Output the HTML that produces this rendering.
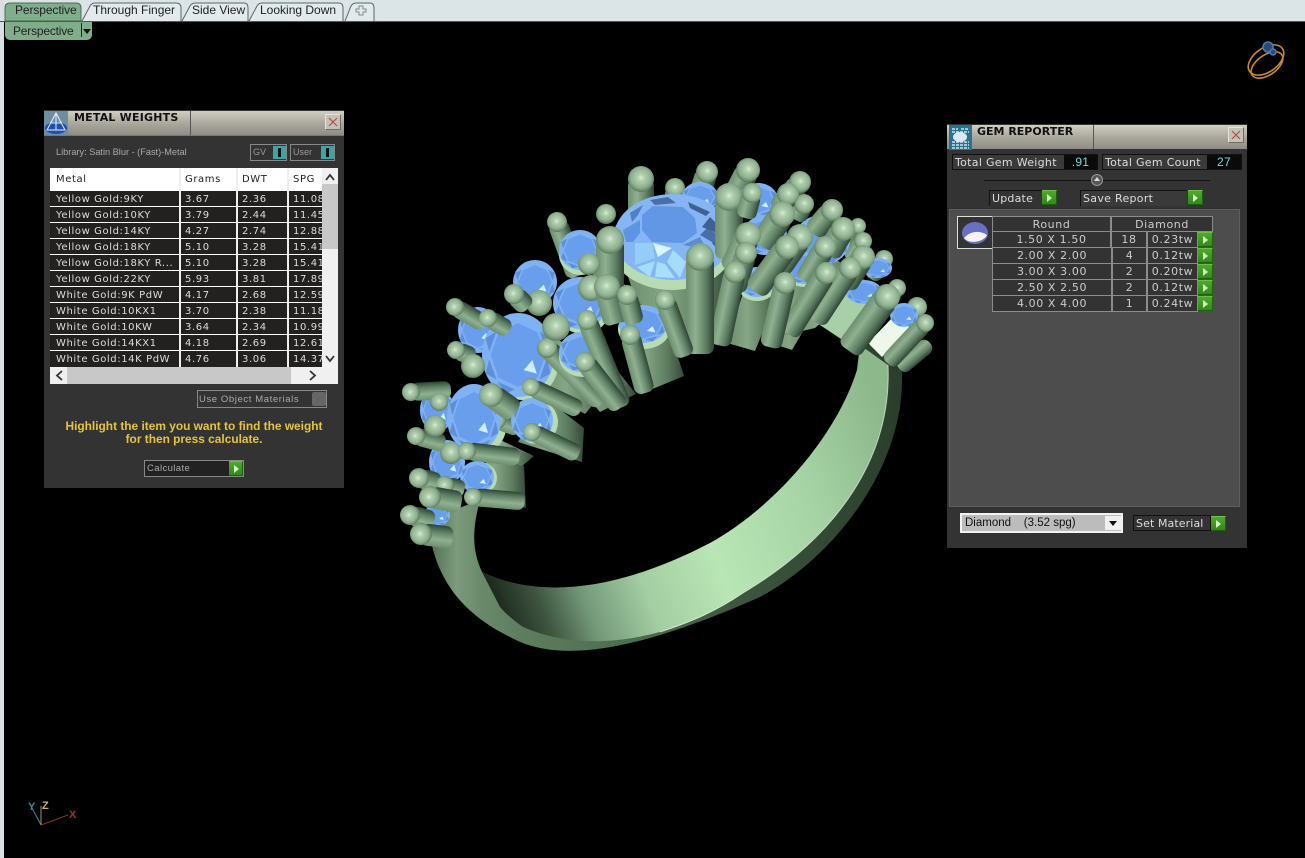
<!DOCTYPE html>
<html><head><meta charset="utf-8"><title>Gem Reporter</title>
<style>
html,body{margin:0;padding:0;width:1305px;height:858px;overflow:hidden;background:#000}
body{position:relative;font-family:"Liberation Sans",sans-serif}
.a,.a *{box-sizing:border-box}
.a{position:absolute;white-space:nowrap}
.d{font-family:"DejaVu Sans",sans-serif;font-size:10px;color:#ddd}
.g{position:absolute;width:15px;height:15px;background:linear-gradient(#4fa92c,#2f8a18);border-top:1px solid #6cc04a;border-right:1px solid #1f5f10;border-bottom:1px solid #1f5f10}
.g:after{content:"";position:absolute;left:5px;top:3px;border-left:5px solid #d9f0c8;border-top:4px solid transparent;border-bottom:4px solid transparent}
.tb{background:linear-gradient(#d0cec2,#a8a69b 55%,#8f8d83);}
.x{position:absolute;width:16px;height:16px;background:#c4c2b6;border:1px solid #e6e4da;border-right-color:#6e6c64;border-bottom-color:#6e6c64}
.tt{position:absolute;top:2px;font-size:12px;color:#222;line-height:16px}
.r{position:absolute;left:0;width:272px;height:15px;background:#222120;overflow:hidden;letter-spacing:.6px}
.r span,.h span{position:absolute;top:1.500px;line-height:14px}
.h span{color:#222;top:5px;letter-spacing:.6px}
.vl{position:absolute;width:1.5px;background:#eee}
.rw{position:absolute;height:16px;border:1px solid #8c8c8c;border-top:0;background:#333;color:#ccc;font-size:11px;letter-spacing:.6px;line-height:16px;text-align:center}
.p rect{fill:url(#c);rx:7px}.p circle{fill:url(#b)}
</style></head>
<body>
<div class="a" style="left:0;top:0;width:1305px;height:21px;background:#dbe4e6"></div>
<svg class="a" style="left:0;top:0" width="400" height="22">
<path d="M5,21 V8 Q5,3 10,3 H76 Q81,3 81,8 V21 Z" fill="#7fae8a" stroke="#4f6a55"/>
<g fill="#e2eaec" stroke="#5c6468">
<path d="M82,21 L90,6 Q92,3 95,3 H176 Q181,3 181,8 V21" />
<path d="M182,21 L190,6 Q192,3 195,3 H244 Q248,3 248,8 V21"/>
<path d="M249,21 L257,6 Q259,3 262,3 H339 Q343,3 343,8 V21"/>
<path d="M345,21 L351,6 Q353,3 356,3 H370 Q374,3 374,8 V21"/>
</g>
<path d="M359,6 H363 V9 H366 V12 H363 V15 H359 V12 H356 V9 H359 Z" stroke="#888" fill="none"/>
</svg>
<div class="tt" style="left:15px;letter-spacing:-.1px">Perspective</div>
<div class="tt" style="left:93px">Through Finger</div>
<div class="tt" style="left:192px">Side View</div>
<div class="tt" style="left:260px">Looking Down</div>
<div class="a" style="left:0;top:0;width:4px;height:858px;background:#d9dfe2"></div>
<div class="a" style="left:0;top:21px;width:1305px;height:1px;background:#555"></div>
<div class="a" style="left:5px;top:22px;width:87px;height:18px;background:#80ad8a;border-radius:0 0 5px 5px;font-size:12px;letter-spacing:-.2px;color:#222;line-height:18px;padding-left:8px">Perspective
<div class="a" style="left:76px;top:1px;width:1px;height:14px;background:#222"></div>
<div class="a" style="left:78px;top:7px;border-top:5px solid #111;border-left:4px solid transparent;border-right:4px solid transparent"></div></div>

<svg class="a" style="left:0;top:0" width="1305" height="858" viewBox="0 0 1305 858">
<defs>
<linearGradient id="c" x1="0" x2="1" y1="0" y2="0"><stop offset="0" stop-color="#6d8f6f"/><stop offset=".35" stop-color="#8fb190"/><stop offset=".72" stop-color="#5c7d62"/><stop offset="1" stop-color="#2f4435"/></linearGradient>
<radialGradient id="b" cx=".5" cy=".45" r=".55"><stop offset="0" stop-color="#d8ecd4"/><stop offset=".25" stop-color="#b0cfae"/><stop offset=".7" stop-color="#8fb090"/><stop offset="1" stop-color="#5a7a5c"/></radialGradient>
<linearGradient id="of" gradientUnits="userSpaceOnUse" x1="428" x2="900" y1="0" y2="0"><stop offset="0" stop-color="#4f6c50"/><stop offset=".06" stop-color="#7b9b7c"/><stop offset=".11" stop-color="#6a8a6b"/><stop offset=".2" stop-color="#5d7d5f"/><stop offset=".4" stop-color="#4f6f51"/><stop offset=".7" stop-color="#3a533c"/><stop offset="1" stop-color="#2a3e2c"/></linearGradient>
<linearGradient id="fc" gradientUnits="userSpaceOnUse" x1="490" x2="890" y1="590" y2="440"><stop offset="0" stop-color="#1c281d"/><stop offset=".1" stop-color="#3e5640"/><stop offset=".2" stop-color="#74997a"/><stop offset=".34" stop-color="#a3cda2"/><stop offset=".52" stop-color="#b9e6b5"/><stop offset=".78" stop-color="#a6d3a4"/><stop offset="1" stop-color="#8cb88c"/></linearGradient>
<linearGradient id="bd" x1="0" x2="1" y1="0" y2="0"><stop offset="0" stop-color="#6a8a6b"/><stop offset=".4" stop-color="#86a786"/><stop offset=".75" stop-color="#5d7c5f"/><stop offset="1" stop-color="#34493a"/></linearGradient>
<g id="gm">
<circle r="50" fill="#7fb2f3"/>
<polygon points="38,0 27,27 0,38 -27,27 -38,0 -27,-27 0,-38 27,-27" fill="#689eeb"/>
<g fill="#5f8fd8"><polygon points="40,4 30,29 45,22"/><polygon points="4,41 30,32 20,46"/><polygon points="-4,41 -28,32 -18,46"/><polygon points="-40,5 -30,29 -45,22"/><polygon points="-40,-4 -30,-28 -45,-20"/><polygon points="40,-4 30,-28 45,-20"/></g>
<polygon points="8,18 20,6 26,22" fill="#cfefff"/>
</g>
</defs>

<path d="M428,520 C432,570 455,610 510,637 C560,665 640,650 760,597 C830,560 905,470 902,373 L900,345 L860,345 L857,370 C835,440 770,510 710,543 C620,590 540,600 482,572 C472,550 472,530 480,500 Z" fill="url(#of)"/>
<path d="M482,572 C540,600 620,590 710,543 C770,510 835,440 857,370 L860,345 L888,365 C892,455 840,535 743,593 C690,630 600,660 523,627 C513,620 505,613 500,607 Z" fill="url(#fc)"/>
<path d="M888,365 C892,455 840,535 743,593 C715,612 690,622 660,632" fill="none" stroke="#e4f6df" stroke-width="1" opacity=".7"/>

<g class="p">
<g transform="translate(641 179)"><rect x="-13" width="26" height="55"/><circle r="13"/></g>
<g transform="translate(707 172) rotate(18)"><rect x="-11" width="22" height="32"/><circle r="11"/></g>
<g transform="translate(748 170) rotate(27)"><rect x="-12" width="24" height="32"/><circle r="12"/></g>
<g transform="translate(800 182) rotate(37)"><rect x="-11" width="22" height="40"/><circle r="11"/></g>
<g transform="translate(675 188)"><rect x="-10" width="20" height="12"/><circle r="10"/></g>
<g transform="translate(606 214)"><circle r="10"/></g>
<g transform="translate(557 222) rotate(-20)"><rect x="-10" width="20" height="58"/><circle r="10"/></g>
<g transform="translate(917 307) rotate(40)"><rect x="-9" width="18" height="24"/><circle r="10"/></g>
<g transform="translate(897 288) rotate(35)"><rect x="-9" width="18" height="24"/><circle r="9"/></g>
<g transform="translate(884 259) rotate(35)"><rect x="-9" width="18" height="24"/><circle r="9"/></g>
<g transform="translate(858 226) rotate(35)"><rect x="-8" width="16" height="24"/><circle r="8"/></g>
<g transform="translate(863 241) rotate(35)"><rect x="-9" width="18" height="24"/><circle r="9"/></g>
<g transform="translate(930 343) rotate(50)"><rect x="-8" width="16" height="40"/></g>
</g>

<g fill="url(#bd)">
<polygon points="622,258 648,338 708,348 730,258"/>
<polygon points="618,325 645,392 684,376 670,332"/>
<polygon points="743,293 727,343 755,351 777,297"/>
<polygon points="790,270 762,340 792,350 830,285"/>
<polygon points="830,255 868,282 815,328 785,335"/>
<polygon points="562,365 600,412 636,394 605,355"/>
<polygon points="535,385 585,414 612,382 553,335"/>
<polygon points="545,398 584,428 582,462 518,442"/>
<polygon points="488,458 524,466 526,508 473,493"/>
<polygon points="492,436 534,456 522,466 478,452"/>
<polygon points="590,270 625,330 650,315 600,255"/>
</g>
<polygon points="817,323 848,290 873,303 847,343" fill="#a9cfa8"/>
<polygon points="868,343 893,317 910,327 882,357" fill="#eef8ea"/>

<g fill="#b7dcb3">
<ellipse cx="672" cy="245" rx="62" ry="45"/><ellipse cx="581" cy="255" rx="22" ry="20"/><ellipse cx="644" cy="329" rx="26" ry="20"/><ellipse cx="757" cy="286" rx="19" ry="15"/><ellipse cx="805" cy="272" rx="21" ry="15"/><ellipse cx="583" cy="308" rx="27" ry="26"/><ellipse cx="523" cy="360" rx="36" ry="40"/><ellipse cx="480" cy="422" rx="27" ry="33"/>
</g>
<use href="#gm" transform="translate(700 197) scale(.36 .3)"/>
<use href="#gm" transform="translate(758 200) scale(.4 .34)"/>
<use href="#gm" transform="translate(765 235) scale(.44 .4)"/>
<use href="#gm" transform="translate(822 240) scale(.56 .5)"/>
<use href="#gm" transform="translate(878 268) scale(.28 .2)"/>
<use href="#gm" transform="translate(757 282) scale(.36 .3)"/>
<use href="#gm" transform="translate(805 268) scale(.4 .32)"/>
<use href="#gm" transform="translate(864 292) scale(.36 .24)"/>
<use href="#gm" transform="translate(904 315) scale(.28 .24)"/>
<use href="#gm" transform="translate(580 250) scale(.42 .4)"/>
<use href="#gm" transform="translate(643 324) scale(.48 .38)"/>
<use href="#gm" transform="translate(535 282) scale(.44 .44)"/>
<use href="#gm" transform="translate(580 303) scale(.54 .52)"/>
<use href="#gm" transform="translate(478 330) scale(.4 .46)"/>
<use href="#gm" transform="translate(518 355) scale(.72 .84)"/>
<g class="p">
<g transform="translate(547 348) rotate(-45)"><rect x="-10" width="20" height="78"/><circle r="10"/></g>
<g transform="translate(497 420) rotate(-70)"><rect x="-9" width="18" height="25"/><circle r="9"/></g>
</g>
<ellipse cx="583" cy="357" rx="24" ry="20" fill="#b7dcb3"/>
<use href="#gm" transform="translate(581 352) scale(.44 .4)"/>
<ellipse cx="536" cy="422" rx="22" ry="22" fill="#b7dcb3"/>
<use href="#gm" transform="translate(532 420) scale(.42 .44)"/>
<use href="#gm" transform="translate(437 410) scale(.34 .44)"/>
<use href="#gm" transform="translate(474 418) scale(.54 .68)"/>
<use href="#gm" transform="translate(447 462) scale(.36 .44)"/>
<ellipse cx="480" cy="478" rx="17" ry="16" fill="#b7dcb3"/>
<use href="#gm" transform="translate(477 477) scale(.34 .32)"/>
<use href="#gm" transform="translate(437 515) scale(.26 .22)"/>

<ellipse cx="673" cy="237" rx="59" ry="43" fill="#85b6f3"/>
<polygon points="642,215 653,206 683,207 695,218 697,233 683,243 652,242 642,230" fill="#6197e4"/>
<g fill="#4a6fa8"><polygon points="650,200 668,197 676,203 655,205"/><polygon points="700,235 707,228 722,237 717,245"/></g>
<g fill="#3f6090"><polygon points="688,202 710,212 706,216 690,208"/><polygon points="702,227 710,217 725,232 722,235"/><polygon points="712,243 727,235 723,248 718,250"/></g>
<polygon points="630,213 643,205 638,215 632,222" fill="#4f7fc4"/>
<polygon points="623,230 640,220 640,233 633,242 626,242" fill="#5d94e4"/>
<polygon points="683,245 700,237 707,250 693,247" fill="#5c8bd0"/>
<polygon points="635,243 652,243 655,258 635,265" fill="#94cdf8"/>
<polygon points="653,243 672,248 658,257" fill="#d8f7fe"/>
<polygon points="673,250 686,262 680,278 667,262" fill="#a4dcfb"/>
<polygon points="637,267 655,261 650,277" fill="#a4dcfb"/>
<polygon points="657,262 665,264 675,278 655,277" fill="#a8e0fb"/>

<g class="p">
<g transform="translate(729 197)"><rect x="-14" width="28" height="62"/><circle r="14"/></g>
<g transform="translate(752 193) rotate(15)"><rect x="-10" width="20" height="26"/><circle r="10"/></g>
<g transform="translate(804 204) rotate(30)"><rect x="-10" width="20" height="18"/><circle r="10"/></g>
<g transform="translate(788 194) rotate(30)"><rect x="-11" width="22" height="20"/><circle r="11"/></g>
<g transform="translate(782 214) rotate(33)"><rect x="-13" width="26" height="38"/><circle r="13"/></g>
<g transform="translate(832 210) rotate(40)"><rect x="-11" width="22" height="30"/><circle r="11"/></g>
<g transform="translate(843 229) rotate(30)"><rect x="-12" width="24" height="30"/><circle r="12"/></g>
<g transform="translate(800 237) rotate(35)"><rect x="-13" width="26" height="40"/><circle r="13"/></g>
<g transform="translate(748 235) rotate(25)"><rect x="-13" width="26" height="40"/><circle r="13"/></g>
<g transform="translate(746 253) rotate(17)"><rect x="-11" width="22" height="40"/><circle r="11"/></g>
<g transform="translate(787 247) rotate(36)"><rect x="-12" width="24" height="55"/><circle r="12"/></g>
<g transform="translate(825 247) rotate(31)"><rect x="-11" width="22" height="40"/><circle r="11"/></g>
<g transform="translate(863 257) rotate(33)"><rect x="-12" width="24" height="35"/><circle r="12"/></g>
<g transform="translate(850 268) rotate(33)"><rect x="-11" width="22" height="64"/><circle r="11"/></g>
<g transform="translate(826 273) rotate(32)"><rect x="-11" width="22" height="72"/><circle r="11"/></g>
<g transform="translate(785 283) rotate(13)"><rect x="-11" width="22" height="66"/><circle r="11"/></g>
<g transform="translate(735 272) rotate(12)"><rect x="-11" width="22" height="75"/><circle r="11"/></g>
<g transform="translate(700 257)"><rect x="-14" width="28" height="97"/><circle r="14"/></g>
<g transform="translate(887 297) rotate(36)"><rect x="-13" width="26" height="66"/><circle r="13"/></g>
<g transform="translate(925 323) rotate(43)"><rect x="-9" width="18" height="55"/><circle r="9"/></g>
<g transform="translate(610 240)"><rect x="-14" width="28" height="62"/><circle r="14"/></g>
<g transform="translate(589 264)"><circle r="11"/></g>
<g transform="translate(591 288)"><circle r="13"/></g>
<g transform="translate(607 287) rotate(-15)"><rect x="-13" width="26" height="38"/><circle r="13"/></g>
<g transform="translate(627 295) rotate(-15)"><rect x="-10" width="20" height="30"/><circle r="10"/></g>
<g transform="translate(665 300) rotate(-20)"><rect x="-10" width="20" height="60"/><circle r="10"/></g>
<g transform="translate(630 335) rotate(-15)"><rect x="-10" width="20" height="60"/><circle r="10"/></g>
<g transform="translate(587 320) rotate(-22)"><rect x="-10" width="20" height="94"/><circle r="10"/></g>
<g transform="translate(585 362) rotate(-38)"><rect x="-10" width="20" height="58"/><circle r="10"/></g>
<g transform="translate(547 348)"><circle r="10"/></g>
<g transform="translate(556 327)"><circle r="14"/></g>
<g transform="translate(539 303)"><circle r="13"/></g>
<g transform="translate(514 294) rotate(-45)"><rect x="-10" width="20" height="20"/><circle r="10"/></g>
<g transform="translate(455 307) rotate(-60)"><rect x="-9" width="18" height="35"/><circle r="9"/></g>
<g transform="translate(488 318) rotate(-60)"><rect x="-9" width="18" height="25"/><circle r="9"/></g>
<g transform="translate(456 350) rotate(-68)"><rect x="-9" width="18" height="20"/><circle r="9"/></g>
<g transform="translate(473 366)"><circle r="12"/></g>
<g transform="translate(491 395) rotate(-55)"><rect x="-12" width="24" height="30"/><circle r="12"/></g>
<g transform="translate(531 387) rotate(-65)"><rect x="-9" width="18" height="55"/><circle r="9"/></g>
<g transform="translate(532 432) rotate(-64)"><rect x="-9" width="18" height="52"/><circle r="9"/></g>
<g transform="translate(411 392) rotate(-93)"><rect x="-9" width="18" height="40"/><circle r="9"/></g>
<g transform="translate(439 402)"><circle r="9"/></g>
<g transform="translate(416 436) rotate(-75)"><rect x="-9" width="18" height="30"/><circle r="9"/></g>
<g transform="translate(435 426)"><circle r="11"/></g>
<g transform="translate(451 453)"><circle r="11"/></g>
<g transform="translate(467 451) rotate(-83)"><rect x="-9" width="18" height="53"/><circle r="9"/></g>
<g transform="translate(419 478) rotate(-75)"><rect x="-10" width="20" height="22"/><circle r="10"/></g>
<g transform="translate(445 485) rotate(-75)"><rect x="-9" width="18" height="20"/><circle r="9"/></g>
<g transform="translate(410 515) rotate(-75)"><rect x="-10" width="20" height="25"/><circle r="10"/></g>
<g transform="translate(430 497) rotate(-80)"><rect x="-11" width="22" height="32"/><circle r="11"/></g>
<g transform="translate(473 497) rotate(-85)"><rect x="-9" width="18" height="52"/><circle r="9"/></g>
<g transform="translate(421 534) rotate(-83)"><rect x="-11" width="22" height="32"/><circle r="11"/></g>
</g>

<g fill="none" stroke="#c98a2c" stroke-width="1.6">
<ellipse cx="1266" cy="60" rx="20" ry="12" transform="rotate(-35 1266 60)"/>
<ellipse cx="1267" cy="65" rx="18" ry="10" transform="rotate(-35 1267 65)"/>
</g>
<g fill="#2c4a78" stroke="#4a7db0" stroke-width="1.500"><circle cx="1268" cy="47" r="5"/><circle cx="1273" cy="52" r="3"/></g>
<g stroke-width="1" fill="none">
<line x1="41" y1="825" x2="31" y2="806" stroke="#3a8a94"/>
<line x1="41" y1="825" x2="41" y2="806" stroke="#a89a5a"/>
<line x1="41" y1="825" x2="68" y2="815" stroke="#8a3030"/>
</g>
<text x="28" y="810" font-family="Liberation Sans" font-size="11" font-weight="bold" fill="#3a8a94">Y</text>
<text x="42" y="809" font-family="Liberation Sans" font-size="11" font-weight="bold" fill="#c8b070">Z</text>
<text x="69" y="818" font-family="Liberation Sans" font-size="11" font-weight="bold" fill="#a03030">X</text>
</svg>

<!-- METAL WEIGHTS -->
<div class="a" style="left:44px;top:110px;width:300px;height:378px;background:#333">
<div class="a tb" style="left:0;top:1px;width:300px;height:24px"></div>
<div class="a" style="left:146px;top:1px;width:1px;height:24px;background:#555"></div>
<div class="a" style="left:0;top:25px;width:300px;height:1px;background:#777"></div>
<svg class="a" style="left:0;top:1px" width="24" height="24"><rect width="24" height="24" fill="#6f8ea0"/><ellipse cx="12" cy="17" rx="11" ry="6" fill="#1d4fb0"/><path d="M12,2 L3,19 H21 Z M12,2 V19 M7,12 H17" fill="none" stroke="#e8f0f8" stroke-width="1"/></svg>
<div class="a" style="left:30px;top:0;font:bold 11px/15px 'DejaVu Sans',sans-serif;letter-spacing:.2px;color:#111">METAL WEIGHTS</div>
<div class="x" style="left:281px;top:4px"><svg width="14" height="14" style="display:block"><path d="M3,3 L11,11 M11,3 L3,11" stroke="#b84b3e" stroke-width="1.2"/></svg></div>
<div class="a" style="left:12px;top:36px;font-size:9.2px;line-height:12px;color:#aaa">Library: Satin Blur - (Fast)-Metal</div>
<div class="a" style="left:206px;top:34px;width:37px;height:17px;border:1px solid #888;font-size:9px;line-height:15px;color:#999;padding-left:2px">GV<div class="a" style="left:22px;top:1px;width:13px;height:13px;background:#39a5a5"><div class="a" style="left:5px;top:2px;width:3px;height:9px;background:#111"></div></div></div>
<div class="a" style="left:246px;top:34px;width:45px;height:17px;border:1px solid #888;font-size:9px;line-height:15px;color:#999;padding-left:2px">User<div class="a" style="left:30px;top:1px;width:13px;height:13px;background:#39a5a5"><div class="a" style="left:5px;top:2px;width:3px;height:9px;background:#111"></div></div></div>
<div class="a" style="left:6px;top:58px;width:288px;height:216px;background:#f0f0f0">
<div class="a" style="left:0;top:0;width:272px;height:199px;background:#fff;overflow:hidden">
<div class="a h d" style="left:0;top:0;width:272px;height:23px"><span style="left:6px">Metal</span><span style="left:135px">Grams</span><span style="left:192px">DWT</span><span style="left:243px">SPG</span></div>
<div class="r d" style="top:23px"><span style="left:6px">Yellow Gold:9KY</span><span style="left:135px">3.67</span><span style="left:192px">2.36</span><span style="left:243px">11.08</span></div>
<div class="r d" style="top:39px"><span style="left:6px">Yellow Gold:10KY</span><span style="left:135px">3.79</span><span style="left:192px">2.44</span><span style="left:243px">11.45</span></div>
<div class="r d" style="top:55px"><span style="left:6px">Yellow Gold:14KY</span><span style="left:135px">4.27</span><span style="left:192px">2.74</span><span style="left:243px">12.88</span></div>
<div class="r d" style="top:71px"><span style="left:6px">Yellow Gold:18KY</span><span style="left:135px">5.10</span><span style="left:192px">3.28</span><span style="left:243px">15.41</span></div>
<div class="r d" style="top:87px"><span style="left:6px">Yellow Gold:18KY R...</span><span style="left:135px">5.10</span><span style="left:192px">3.28</span><span style="left:243px">15.41</span></div>
<div class="r d" style="top:103px"><span style="left:6px">Yellow Gold:22KY</span><span style="left:135px">5.93</span><span style="left:192px">3.81</span><span style="left:243px">17.89</span></div>
<div class="r d" style="top:119px"><span style="left:6px">White Gold:9K PdW</span><span style="left:135px">4.17</span><span style="left:192px">2.68</span><span style="left:243px">12.59</span></div>
<div class="r d" style="top:135px"><span style="left:6px">White Gold:10KX1</span><span style="left:135px">3.70</span><span style="left:192px">2.38</span><span style="left:243px">11.18</span></div>
<div class="r d" style="top:151px"><span style="left:6px">White Gold:10KW</span><span style="left:135px">3.64</span><span style="left:192px">2.34</span><span style="left:243px">10.99</span></div>
<div class="r d" style="top:167px"><span style="left:6px">White Gold:14KX1</span><span style="left:135px">4.18</span><span style="left:192px">2.69</span><span style="left:243px">12.61</span></div>
<div class="r d" style="top:183px;height:16px"><span style="left:6px">White Gold:14K PdW</span><span style="left:135px">4.76</span><span style="left:192px">3.06</span><span style="left:243px">14.37</span></div>
<div class="vl" style="left:129px;top:0;height:199px"></div>
<div class="vl" style="left:186px;top:0;height:199px"></div>
<div class="vl" style="left:237px;top:0;height:199px"></div>
</div>
<div class="a" style="left:272px;top:16px;width:16px;height:65px;background:#c8c8c8"></div>
<div class="a" style="left:17px;top:199px;width:224px;height:17px;background:#c8c8c8"></div>
<svg class="a" style="left:0;top:0" width="288" height="216"><path d="M276,12 L280,7 L284,12 M276,188 L280,193 L284,188" fill="none" stroke="#333" stroke-width="1.8"/><path d="M12,203 L7,207.500 L12,212 M260,203 L265,207.500 L260,212" fill="none" stroke="#333" stroke-width="1.8"/></svg>
</div>
<div class="a" style="left:153px;top:280px;width:130px;height:18px;border:1px solid #888;font-size:9.500px;letter-spacing:.6px;line-height:17px;color:#aaa;padding-left:1px">Use Object Materials<div class="a" style="left:114px;top:1px;width:14px;height:14px;background:#666;border-radius:2px"></div></div>
<div class="a" style="left:0;top:310px;width:300px;text-align:center;font:bold 11.9px/13px 'Liberation Sans',sans-serif;color:#e6c43c">Highlight the item you want to find the weight<br>for then press calculate.</div>
<div class="a" style="left:100px;top:350px;width:100px;height:17px;border:1px solid #888;background:#222;font-size:9.500px;letter-spacing:.4px;line-height:16px;color:#aaa;padding-left:2px">Calculate<div class="g" style="left:84px;top:0;height:15px;width:14px"></div></div>
</div>

<!-- GEM REPORTER -->
<div class="a" style="left:947px;top:124px;width:300px;height:424px;background:#333">
<div class="a tb" style="left:0;top:1px;width:300px;height:24px"></div>
<div class="a" style="left:146px;top:1px;width:1px;height:24px;background:#555"></div>
<svg class="a" style="left:2px;top:1px" width="23" height="25"><rect width="23" height="25" fill="#26748f"/><ellipse cx="11" cy="12" rx="7" ry="5" fill="#dde8ee"/><path d="M3,4 H9 M12,4 H20 M3,7 H20 M3,17 H20 M3,20 H20 M3,23 H20" stroke="#cfe2ea" stroke-width="1.5" stroke-dasharray="3 1"/></svg>
<div class="x" style="left:281px;top:3px"><svg width="14" height="14" style="display:block"><path d="M3,3 L11,11 M11,3 L3,11" stroke="#b84b3e" stroke-width="1.2"/></svg></div>
<div class="a" style="left:30px;top:0;font:bold 11px/15px 'DejaVu Sans',sans-serif;color:#111">GEM REPORTER</div>
<div class="a d" style="left:5px;top:30px;width:146px;height:16px;border:1px solid #111;background:#3a3a3a;font-size:11px;letter-spacing:.3px;line-height:15px;padding-left:2px">Total Gem Weight<div class="a" style="left:111px;top:0;width:33px;height:14px;background:#0a0a0a;color:#7fd6d6;font:12px/15px 'Liberation Sans',sans-serif;text-align:center">.91</div></div>
<div class="a d" style="left:155px;top:30px;width:140px;height:16px;border:1px solid #111;background:#3a3a3a;font-size:11px;letter-spacing:.3px;line-height:15px;padding-left:2px">Total Gem Count<div class="a" style="left:104px;top:0;width:34px;height:14px;background:#0a0a0a;color:#7fd6d6;font:12px/15px 'Liberation Sans',sans-serif;text-align:center">27</div></div>
<div class="a" style="left:37px;top:56px;width:226px;height:1px;background:#111"></div>
<div class="a" style="left:144px;top:50px;width:12px;height:12px;border-radius:50%;background:#555;border:1px solid #999"><div class="a" style="left:2px;top:2px;border-bottom:4px solid #ddd;border-left:3px solid transparent;border-right:3px solid transparent"></div></div>
<div class="a d" style="left:42px;top:66px;width:53px;height:16px;border-left:1px solid #111;border-top:1px solid #111;font-size:11px;letter-spacing:.2px;line-height:15px;padding-left:2px">Update</div>
<div class="g" style="left:95px;top:66px"></div>
<div class="a d" style="left:133px;top:66px;width:107px;height:16px;border-left:1px solid #111;border-top:1px solid #111;background:#3a3a3a;font-size:11px;letter-spacing:.3px;line-height:15px;padding-left:2px">Save Report</div>
<div class="g" style="left:241px;top:66px"></div>
<div class="a" style="left:2px;top:85px;width:291px;height:298px;background:#4d4d4d;border:1px solid #5e5e5e"></div>
<div class="a" style="left:10px;top:92px;width:36px;height:33px;background:#333;border:1px solid #ddd"><svg width="34" height="31" style="display:block"><ellipse cx="17" cy="16" rx="13" ry="11" fill="#6a6fc4"/><path d="M6,21 C12,14 22,13 29,18 C25,26 10,27 6,21Z" fill="#f4f4f4"/></svg></div>
<div class="rw d" style="left:45px;top:92px;width:119px;border-top:1px solid #8c8c8c">Round</div>
<div class="rw d" style="left:164px;top:92px;width:102px;border-top:1px solid #8c8c8c">Diamond</div>
<div class="rw d" style="left:45px;top:108px;width:119px">1.50 X 1.50</div><div class="rw d" style="left:164px;top:108px;width:36px">18</div><div class="rw d" style="left:200px;top:108px;width:51px">0.23tw</div><div class="g" style="left:251px;top:108px"></div>
<div class="rw d" style="left:45px;top:124px;width:120px">2.00 X 2.00</div><div class="rw d" style="left:165px;top:124px;width:35px">4</div><div class="rw d" style="left:200px;top:124px;width:51px">0.12tw</div><div class="g" style="left:251px;top:124px"></div>
<div class="rw d" style="left:45px;top:140px;width:120px">3.00 X 3.00</div><div class="rw d" style="left:165px;top:140px;width:35px">2</div><div class="rw d" style="left:200px;top:140px;width:51px">0.20tw</div><div class="g" style="left:251px;top:140px"></div>
<div class="rw d" style="left:45px;top:156px;width:120px">2.50 X 2.50</div><div class="rw d" style="left:165px;top:156px;width:35px">2</div><div class="rw d" style="left:200px;top:156px;width:51px">0.12tw</div><div class="g" style="left:251px;top:156px"></div>
<div class="rw d" style="left:45px;top:172px;width:120px">4.00 X 4.00</div><div class="rw d" style="left:165px;top:172px;width:35px">1</div><div class="rw d" style="left:200px;top:172px;width:51px">0.24tw</div><div class="g" style="left:251px;top:172px"></div>
<div class="a" style="left:13px;top:389px;width:163px;height:20px;background:#bcbcbc;border:2px solid #f2f2f2;font-size:11.5px;line-height:16px;color:#111;padding-left:3px;white-space:pre">Diamond    (3.52 spg)<div class="a" style="left:143px;top:1px;width:16px;height:14px;background:#f0f0f0"><div class="a" style="left:4px;top:5px;border-top:5px solid #111;border-left:4px solid transparent;border-right:4px solid transparent"></div></div></div>
<div class="a d" style="left:186px;top:391px;width:78px;height:16px;border:1px solid #111;font-size:11px;letter-spacing:.1px;line-height:16px;padding-left:2px">Set Material</div>
<div class="g" style="left:264px;top:392px"></div>
</div>
</body></html>
